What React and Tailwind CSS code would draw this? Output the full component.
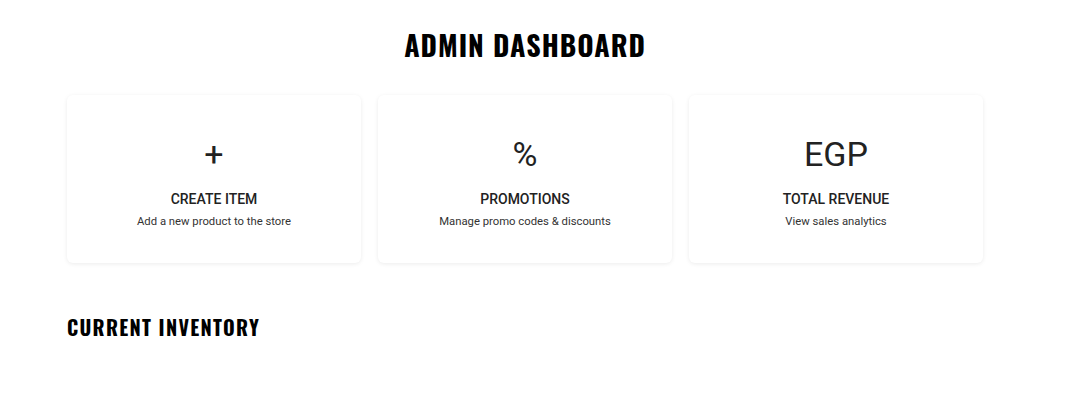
import React from "react";

const cards = [
  { icon: "+", title: "CREATE ITEM", sub: "Add a new product to the store" },
  { icon: "%", title: "PROMOTIONS", sub: "Manage promo codes & discounts" },
  { icon: "EGP", title: "TOTAL REVENUE", sub: "View sales analytics" },
];

export default function App() {
  const display = { fontFamily: '"Oswald", "Liberation Sans Narrow", "DejaVu Sans Condensed", sans-serif' };
  return (
    <div className="w-[1080px] h-[416px] bg-white overflow-hidden" style={{ fontFamily: 'Roboto, "Noto Sans", sans-serif' }}>
      <div className="w-[1050px] pt-[26px]">
        <h1 className="text-center text-[28px] leading-[38px] font-bold tracking-[1px] text-black" style={display}>
          ADMIN DASHBOARD
        </h1>
      </div>

      <div className="px-[67px] pt-[31px]">
        {/* action cards */}
        <div className="grid grid-cols-[repeat(3,294px)] gap-x-[17px]">
          {cards.map((c) => (
            <div key={c.title} className="h-[168px] rounded-md bg-white shadow-[0_1px_4px_rgba(0,0,0,0.08)] flex flex-col items-center pt-[39px]">
              <div className="text-[34px] leading-[40px] text-[#222]">{c.icon}</div>
              <div className="mt-[16px] text-[14px] leading-[18px] font-medium text-[#222]">{c.title}</div>
              <div className="mt-[6px] text-[11.3px] leading-[16px] text-[#333]">{c.sub}</div>
            </div>
          ))}
        </div>

        <h2 className="mt-[51px] text-[20px] leading-[26px] font-bold tracking-[1.3px] text-black" style={display}>
          CURRENT INVENTORY
        </h2>
      </div>
    </div>
  );
}
